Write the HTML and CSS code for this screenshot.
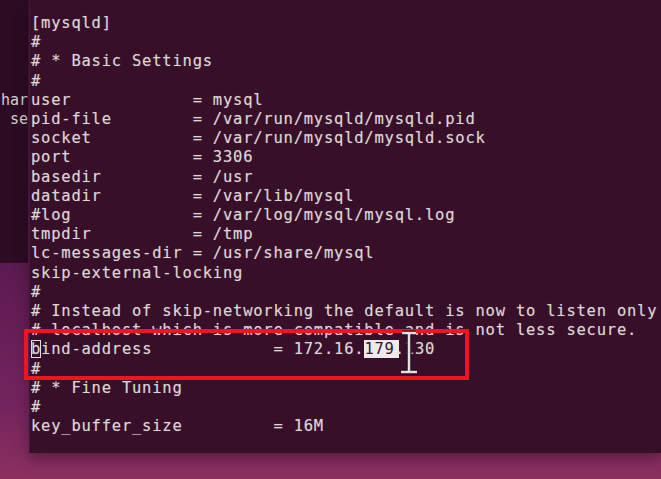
FILE: index.html
```html
<!DOCTYPE html>
<html lang="en">
<head>
  <meta charset="UTF-8">
  <meta name="viewport" content="width=device-width, initial-scale=1">
  <title>my.cnf</title>
  <link rel="stylesheet" href="styles.css">
</head>
<body>

<div class="desktop">
  <div class="back-window">
    <pre class="back-text"><span class="back-line">har</span><span class="back-line">se</span></pre>
  </div>

  <div class="terminal">
<pre class="screen">[mysqld]
#
# * Basic Settings
#
user            = mysql
pid-file        = /var/run/mysqld/mysqld.pid
socket          = /var/run/mysqld/mysqld.sock
port            = 3306
basedir         = /usr
datadir         = /var/lib/mysql
#log            = /var/log/mysql/mysql.log
tmpdir          = /tmp
lc-messages-dir = /usr/share/mysql
skip-external-locking
#
# Instead of skip-networking the default is now to listen only
# localhost which is more compatible and is not less secure.
<span class="cursor">b</span>ind-address            = 172.16.<span class="sel">179</span>.130
#
# * Fine Tuning
#
key_buffer_size         = 16M</pre>
  </div>

  <div class="mark"></div>

  <svg class="ibeam" width="22" height="46" viewBox="0 0 22 46">
    <path d="M4 3 H18 M11 3 V42 M3 42 H19" stroke="#2a0a20" stroke-width="5" fill="none"/>
    <path d="M4 3 H18 M11 3 V42 M3 42 H19" stroke="#e4e0e0" stroke-width="2.5" fill="none"/>
  </svg>
</div>

</body>
</html>
```

FILE: styles.css
```css
body {
  margin: 0;
  background: linear-gradient(180deg, #3a0f30 0%, #5c1a50 55%, #74245e 85%, #8c3060 100%);
  height: 100vh;
  overflow: hidden;
}

.desktop {
  position: relative;
  width: 661px;
  height: 479px;
}

.back-window {
  position: absolute;
  left: 0;
  top: 0;
  width: 28px;
  height: 263px;
  background: #2c0b23;
  overflow: hidden;
}

.back-text {
  margin: 0;
  padding: 91px 0 0 0;
  display: flex;
  flex-direction: column;
  align-items: flex-end;
  font-family: "DejaVu Sans Mono", monospace;
  font-size: 15px;
  line-height: 19.2px;
  color: #d6cfd0;
}

.terminal {
  position: absolute;
  left: 29px;
  top: 0;
  right: 0;
  height: 453px;
  background: #370f29;
  border-left: 1px solid #451836;
  box-shadow: 0 6px 14px rgba(20, 0, 15, 0.35);
  overflow: hidden;
}

.screen {
  margin: 0;
  padding: 14px 0 0 1px;
  font-family: "DejaVu Sans Mono", monospace;
  font-size: 15.5px;
  letter-spacing: 0.77px;
  line-height: 19.2px;
  color: #dcd5d5;
  text-shadow: 0 0 1px rgba(220, 213, 213, 0.4);
  white-space: pre;
}

.cursor {
  outline: 1px solid #e4dede;
  outline-offset: -1px;
}

.sel {
  background: #eeeaea;
  color: #3a1230;
  text-shadow: none;
  box-shadow: 4px 0 0 #eeeaea;
}

.mark {
  position: absolute;
  left: 24px;
  top: 329px;
  width: 445px;
  height: 51px;
  border: 4px solid #ec1520;
  box-sizing: border-box;
}

.ibeam {
  position: absolute;
  left: 398px;
  top: 330px;
}
```
